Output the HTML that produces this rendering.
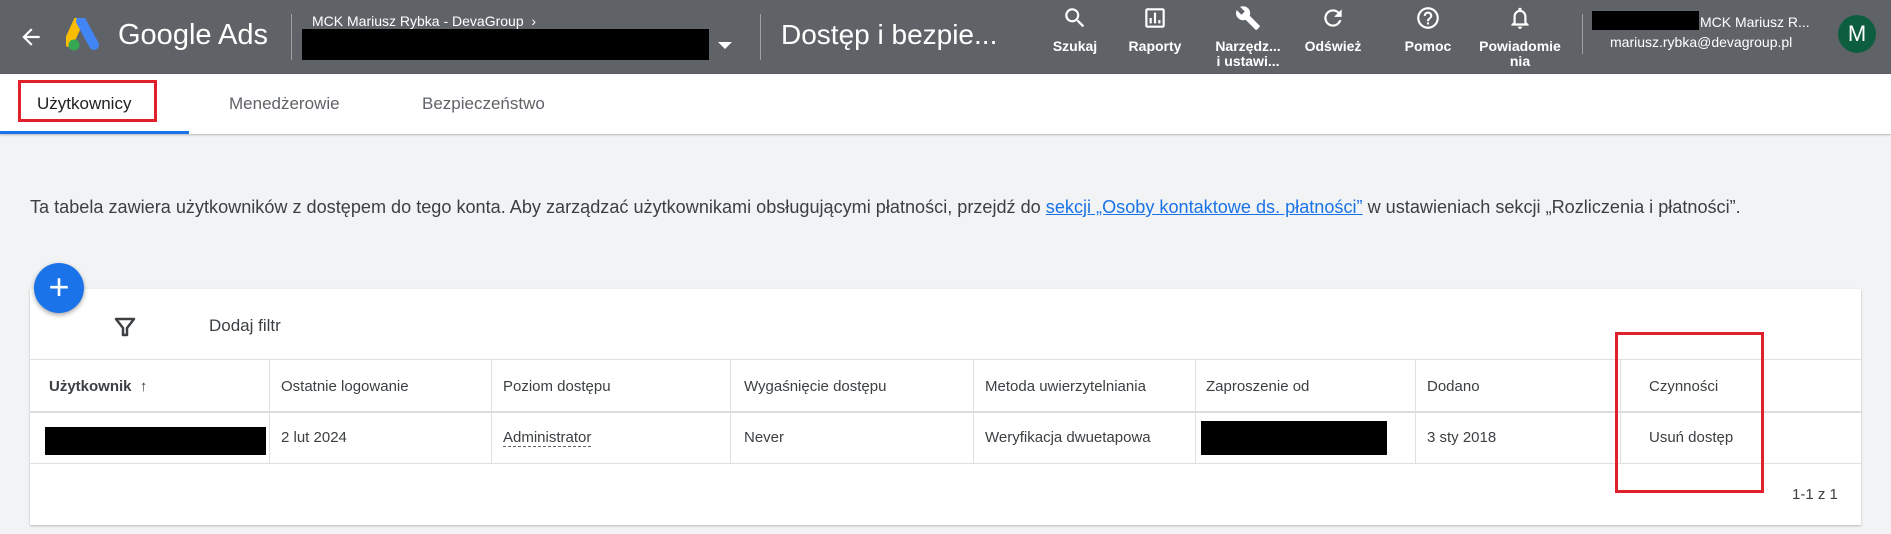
<!DOCTYPE html>
<html><head><meta charset="utf-8"><style>
*{margin:0;padding:0;box-sizing:border-box}
body{width:1891px;height:534px;background:#f1f3f4;font-family:"Liberation Sans",sans-serif;position:relative;overflow:hidden;color:#3c4043}
.a{position:absolute}
.hdr{left:0;top:0;width:1891px;height:74px;background:#5f6368}
.w{color:#fff}
.ic{position:absolute;top:5px;width:90px;text-align:center;color:#fff;font-size:14px;font-weight:bold;line-height:15px}
.ic svg{display:block;margin:0 auto 8px}
.tabs{left:0;top:74px;width:1891px;height:60px;background:#fff;box-shadow:0 1px 2px rgba(0,0,0,.25)}
.card{left:30px;top:289px;width:1831px;height:236px;background:#fff;box-shadow:0 1px 2px rgba(0,0,0,.25)}
.th{position:absolute;top:378px;font-size:15px;color:#3c4043}
.td{position:absolute;top:429px;font-size:15px;color:#3c4043}
.vl{position:absolute;width:1px;background:#e0e0e0;top:359px;height:104px}
</style></head><body>
<div class="a hdr"></div>
<svg class="a" style="left:18px;top:24px" width="26" height="26" viewBox="0 0 24 24"><path d="M20 11H7.8l5.6-5.6L12 4l-8 8 8 8 1.4-1.4L7.8 13H20z" fill="#fff"/></svg>
<svg class="a" style="left:66px;top:18px" width="36" height="34" viewBox="0 0 36 34"><path d="M13 2 L3 24" stroke="#fbbc04" stroke-width="10" stroke-linecap="round"/><path d="M15 3 L28 27" stroke="#4285f4" stroke-width="10" stroke-linecap="round"/><circle cx="8" cy="27" r="5.5" fill="#34a853"/></svg>
<div class="a w" style="left:118px;top:19px;font-size:29px">Google Ads</div>
<div class="a" style="left:291px;top:14px;width:1px;height:46px;background:#9aa0a6"></div>
<div class="a w" style="left:312px;top:13px;font-size:14px">MCK Mariusz Rybka - DevaGroup &nbsp;›</div>
<div class="a" style="left:302px;top:29px;width:407px;height:31px;background:#000"></div>
<div class="a" style="left:718px;top:42px;width:0;height:0;border-left:7px solid transparent;border-right:7px solid transparent;border-top:7px solid #fff"></div>
<div class="a" style="left:760px;top:14px;width:1px;height:46px;background:#9aa0a6"></div>
<div class="a w" style="left:781px;top:19px;font-size:28px">Dostęp i bezpie...</div>
<div class="ic" style="left:1030px"><svg width="26" height="26" viewBox="0 0 24 24"><path fill="#fff" d="M15.5 14h-.8l-.3-.3A6.5 6.5 0 1 0 9.5 16a6.5 6.5 0 0 0 4.2-1.6l.3.3v.8l5 5 1.5-1.5-5-5zm-6 0A4.5 4.5 0 1 1 14 9.5 4.5 4.5 0 0 1 9.5 14z"/></svg>Szukaj</div>
<div class="ic" style="left:1110px"><svg width="26" height="26" viewBox="0 0 24 24"><path fill="#fff" d="M19 3H5a2 2 0 0 0-2 2v14a2 2 0 0 0 2 2h14a2 2 0 0 0 2-2V5a2 2 0 0 0-2-2zm0 16H5V5h14zM7 12h2v5H7zm4-5h2v10h-2zm4 7h2v3h-2z"/></svg>Raporty</div>
<div class="ic" style="left:1203px"><svg width="26" height="26" viewBox="0 0 24 24"><path fill="#fff" d="M22.7 19l-9.1-9.1c.9-2.3.4-5-1.5-6.9-2-2-5-2.4-7.4-1.3L9 6 6 9 1.6 4.7C.4 7.1.9 10.1 2.9 12.1c1.9 1.9 4.6 2.4 6.9 1.5l9.1 9.1c.4.4 1 .4 1.4 0l2.3-2.3c.5-.4.5-1.1.1-1.4z"/></svg>Narzędz...<br>i ustawi...</div>
<div class="ic" style="left:1288px"><svg width="26" height="26" viewBox="0 0 24 24"><path fill="#fff" d="M17.65 6.35A8 8 0 1 0 19.73 14h-2.08A6 6 0 1 1 12 6c1.66 0 3.14.69 4.22 1.78L13 11h7V4z"/></svg>Odśwież</div>
<div class="ic" style="left:1383px"><svg width="26" height="26" viewBox="0 0 24 24"><path fill="#fff" d="M11 18h2v-2h-2zm1-16a10 10 0 1 0 0 20 10 10 0 0 0 0-20zm0 18a8 8 0 1 1 0-16 8 8 0 0 1 0 16zm0-14a4 4 0 0 0-4 4h2a2 2 0 1 1 4 0c0 2-3 1.75-3 5h2c0-2.25 3-2.5 3-5a4 4 0 0 0-4-4z"/></svg>Pomoc</div>
<div class="ic" style="left:1475px"><svg width="26" height="26" viewBox="0 0 24 24"><path fill="#fff" d="M12 22a2 2 0 0 0 2-2h-4a2 2 0 0 0 2 2zm6-6v-5c0-3.07-1.64-5.64-4.5-6.32V4a1.5 1.5 0 0 0-3 0v.68C7.63 5.36 6 7.92 6 11v5l-2 2v1h16v-1zm-2 1H8v-6c0-2.48 1.51-4.5 4-4.5s4 2.02 4 4.5z"/></svg>Powiadomie<br>nia</div>
<div class="a" style="left:1582px;top:14px;width:1px;height:40px;background:#9aa0a6"></div>
<div class="a" style="left:1592px;top:11px;width:107px;height:19px;background:#000"></div>
<div class="a w" style="left:1700px;top:14px;font-size:14px">MCK Mariusz R...</div>
<div class="a w" style="left:1610px;top:34px;font-size:14px">mariusz.rybka@devagroup.pl</div>
<div class="a w" style="left:1838px;top:15px;width:38px;height:38px;border-radius:50%;background:#0d5e3f;font-size:22px;text-align:center;line-height:38px">M</div>
<div class="a tabs"></div>
<div class="a" style="left:0;top:131px;width:189px;height:3px;background:#1a73e8"></div>
<div class="a" style="left:37px;top:94px;font-size:17px;color:#202124">Użytkownicy</div>
<div class="a" style="left:18px;top:80px;width:139px;height:42px;border:3px solid #e0202a"></div>
<div class="a" style="left:229px;top:94px;font-size:17px;color:#5f6368">Menedżerowie</div>
<div class="a" style="left:422px;top:94px;font-size:17px;color:#5f6368">Bezpieczeństwo</div>
<div class="a" style="left:30px;top:197px;font-size:18.1px;color:#3c4043;white-space:nowrap">Ta tabela zawiera użytkowników z dostępem do tego konta. Aby zarządzać użytkownikami obsługującymi płatności, przejdź do <span style="color:#1a73e8;text-decoration:underline">sekcji „Osoby kontaktowe ds. płatności”</span> w ustawieniach sekcji „Rozliczenia i płatności”.</div>
<div class="a card"></div>
<div class="a" style="left:34px;top:263px;width:50px;height:50px;border-radius:50%;background:#1a73e8;box-shadow:0 2px 5px rgba(0,0,0,.35)"></div>
<div class="a w" style="left:34px;top:263px;width:50px;text-align:center;font-size:36px;line-height:48px">+</div>
<svg class="a" style="left:114px;top:316px" width="22" height="22" viewBox="0 0 22 22"><path d="M2 3h18l-7 9v7h-4v-7z" fill="none" stroke="#3c4043" stroke-width="2.5" stroke-linejoin="round"/></svg>
<div class="a" style="left:209px;top:316px;font-size:17px;color:#3c4043">Dodaj filtr</div>
<div class="a" style="left:30px;top:359px;width:1831px;height:1px;background:#e0e0e0"></div>
<div class="a" style="left:30px;top:411px;width:1831px;height:2px;background:#dadce0"></div>
<div class="a" style="left:30px;top:463px;width:1831px;height:1px;background:#e0e0e0"></div>
<div class="vl" style="left:269px"></div><div class="vl" style="left:491px"></div><div class="vl" style="left:730px"></div><div class="vl" style="left:973px"></div><div class="vl" style="left:1195px"></div><div class="vl" style="left:1415px"></div><div class="vl" style="left:1620px"></div>
<div class="th" style="left:49px;font-weight:bold">Użytkownik &nbsp;↑</div>
<div class="th" style="left:281px">Ostatnie logowanie</div>
<div class="th" style="left:503px">Poziom dostępu</div>
<div class="th" style="left:744px">Wygaśnięcie dostępu</div>
<div class="th" style="left:985px">Metoda uwierzytelniania</div>
<div class="th" style="left:1206px">Zaproszenie od</div>
<div class="th" style="left:1427px">Dodano</div>
<div class="th" style="left:1649px">Czynności</div>
<div class="a" style="left:45px;top:427px;width:221px;height:28px;background:#000"></div>
<div class="td" style="left:281px">2 lut 2024</div>
<div class="td" style="left:503px;border-bottom:1px dashed #5f6368">Administrator</div>
<div class="td" style="left:744px">Never</div>
<div class="td" style="left:985px">Weryfikacja dwuetapowa</div>
<div class="a" style="left:1201px;top:421px;width:186px;height:34px;background:#000"></div>
<div class="td" style="left:1427px">3 sty 2018</div>
<div class="td" style="left:1649px">Usuń dostęp</div>
<div class="a" style="left:1615px;top:332px;width:149px;height:161px;border:3px solid #e0202a"></div>
<div class="a" style="left:1792px;top:486px;font-size:15px">1-1 z 1</div>
</body></html>
